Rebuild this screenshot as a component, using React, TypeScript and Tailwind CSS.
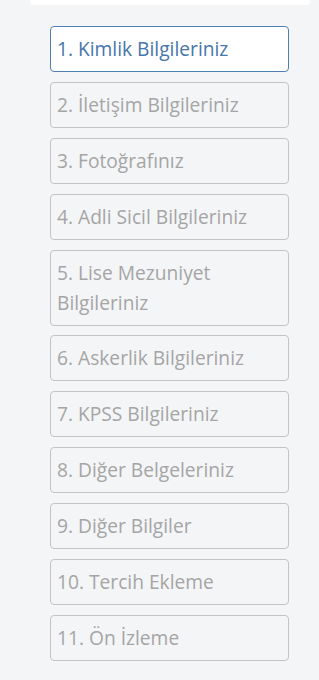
import React from "react";
import clsx from "clsx";

const steps = [
  "1. Kimlik Bilgileriniz",
  "2. İletişim Bilgileriniz",
  "3. Fotoğrafınız",
  "4. Adli Sicil Bilgileriniz",
  "5. Lise Mezuniyet Bilgileriniz",
  "6. Askerlik Bilgileriniz",
  "7. KPSS Bilgileriniz",
  "8. Diğer Belgeleriniz",
  "9. Diğer Bilgiler",
  "10. Tercih Ekleme",
  "11. Ön İzleme",
];

export default function App() {
  const active = 0;
  return (
    <div className="min-h-screen bg-[#f4f5f7] font-['Open_Sans',sans-serif]">
      {/* top card edge */}
      <div className="ml-[30px] w-[280px] h-[5px] bg-white rounded-b-sm" />

      {/* step list */}
      <ul className="ml-[50px] w-[239px] pt-[21px] flex flex-col gap-[9.9px]">
        {steps.map((s, i) => (
          <li
            key={s}
            className={clsx(
              "rounded-[4px] border px-[6px] py-[7px] text-[19.2px] leading-[30px]",
              i === active
                ? "bg-white border-[#4f7fb3] text-[#4676ab]"
                : "border-[#c4c4c4] text-[#a5a5a5]"
            )}
          >
            {s}
          </li>
        ))}
      </ul>
    </div>
  );
}
